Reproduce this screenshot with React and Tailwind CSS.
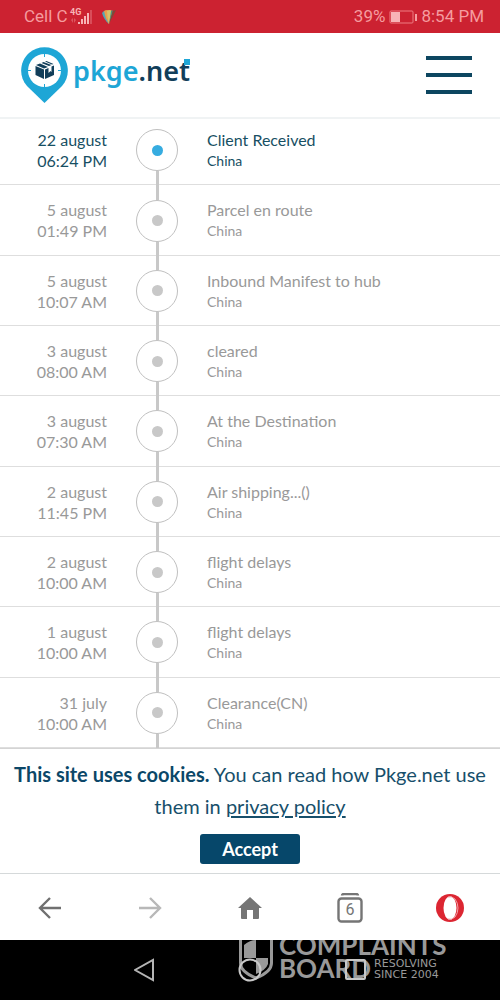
const events = [
  ["22 august", "06:24 PM", "Client Received"],
  ["5 august", "01:49 PM", "Parcel en route"],
  ["5 august", "10:07 AM", "Inbound Manifest to hub"],
  ["3 august", "08:00 AM", "cleared"],
  ["3 august", "07:30 AM", "At the Destination"],
  ["2 august", "11:45 PM", "Air shipping...()"],
  ["2 august", "10:00 AM", "flight delays"],
  ["1 august", "10:00 AM", "flight delays"],
  ["31 july", "10:00 AM", "Clearance(CN)"],
];

function StatusBar() {
  return (
    <div className="flex h-[33px] shrink-0 items-center justify-between bg-[#cc2231] pt-px pr-4 pl-6 font-['Roboto',sans-serif] text-[17px] text-[#f59c9f]">
      <div className="flex items-center">
        <span>Cell C</span>
        <svg className="h-5 w-[26px]" viewBox="0 0 26 20" aria-hidden="true">
          <text x="2" y="8" fontSize="9" fontWeight="700" fill="#f8b4b6">4G</text>
          <g fill="#f8b4b6">
            <path d="M3 13l2-2v5zM6 11l2 2-2 3z" opacity=".35" />
            <rect x="10" y="15" width="2" height="2" />
            <rect x="13" y="12" width="2" height="5" />
            <rect x="16" y="9" width="2" height="8" />
            <rect x="19" y="6" width="2" height="11" />
            <rect x="22" y="3" width="2" height="14" opacity=".3" />
          </g>
        </svg>
        <svg className="ml-2 h-4 w-4" viewBox="0 0 16 16" aria-hidden="true">
          <path d="M0 4Q2 1 5 2L7 15Q2 11 0 4z" fill="#54a6b5" />
          <path d="M2 2Q5 0 8 2L7 15Q3 9 2 2z" fill="#e8a04d" />
          <path d="M5 2Q8 0 10 2L7 15Q5 8 5 2z" fill="#d8c36a" />
          <path d="M9 2l2-1-4 14z" fill="#46937a" />
          <path d="M11 2l3-1-7 14z" fill="#7d4a38" />
        </svg>
      </div>
      <div className="flex items-center gap-1">
        <span>39%</span>
        <svg className="h-4 w-7" viewBox="0 0 28 16" aria-hidden="true">
          <rect x="1" y="2" width="23" height="12" rx="1" fill="none" stroke="#ee7d82" />
          <rect x="2" y="3" width="9" height="10" fill="#f8b4b6" />
          <rect x="26" y="5" width="2" height="7" fill="#f59c9f" />
        </svg>
        <span>8:54 PM</span>
      </div>
    </div>
  );
}

function Header() {
  return (
    <header className="z-10 flex h-[86px] shrink-0 items-center justify-between border-b-2 border-[#f0f3f4] bg-white pr-7 pl-5">
      <a href="#" className="flex items-center gap-[5px]" aria-label="pkge.net">
        <svg className="h-[58px] w-12" viewBox="0 0 48 58" aria-hidden="true">
          <path d="M24.500 57L7 40C-2 30 0 15 9 7a23.500 23.500 0 0 1 31 0c9 8 11 23 2 33z" fill="#1ea6d6" />
          <circle cx="24.500" cy="24.500" r="16.500" fill="#fff" />
          <path d="M24.500 7v4M24.500 38v4M7 24.500h4M38 24.500h4" stroke="#1ea6d6" />
          <g fill="#113e5a">
            <path d="M15.500 20l8.500 3.500v9.500l-8.500-4z" />
            <path d="M25 23.500l3.500-1.500v5l2-2 1 1v-5.500l2.500-1v9.500l-9 4z" />
            <path d="M16 19l4-1.500 8 3.500-4 1.500zM21.500 17l2-1 8 3-2.500 1zM25 15.500l1.500-.5 7 3-1.500.5z" />
          </g>
        </svg>
        <span className="relative pb-2 font-['Noto_Sans',sans-serif] text-[27px] leading-8 font-semibold text-[#113e5a]">
          <span className="text-[#1ea6d6]">pkge</span>.net
          <span className="absolute top-1 right-0 size-[6px] bg-[#1ea6d6]" />
        </span>
      </a>
      <button type="button" aria-label="Menu" className="flex w-[46px] flex-col gap-[13px]">
        <span className="h-1 w-full bg-[#0d4660]" />
        <span className="h-1 w-full bg-[#0d4660]" />
        <span className="h-1 w-full bg-[#0d4660]" />
      </button>
    </header>
  );
}

function TrackingEvent({ date, time, title, current }) {
  return (
    <li className={`flex flex-1 border-b border-[#dedede] text-base leading-[21px] ${current ? "text-[#174f63]" : "text-[#999]"}`}>
      <div className="w-[107px] shrink-0 pt-[14px] text-right">
        <p>{date}</p>
        <p>{time}</p>
      </div>
      <div className="mx-[29px] flex w-[42px] shrink-0 flex-col items-center">
        <span className={`w-[3px] flex-1 ${current ? "" : "bg-[#c8c8c8]"}`} />
        <span className="flex size-[42px] items-center justify-center rounded-full border border-[#c0c0c0]">
          <span className={`size-[11px] rounded-full ${current ? "bg-[#36ace0]" : "bg-[#c8c8c8]"}`} />
        </span>
        <span className="-mb-px w-[3px] flex-1 bg-[#c8c8c8]" />
      </div>
      <div className="pt-[14px]">
        <p>{title}</p>
        <p className="text-[14px] leading-[21px]">China</p>
      </div>
    </li>
  );
}

function CookieNotice() {
  return (
    <section className="z-10 flex shrink-0 flex-col items-center border-t border-[#d4d4d4] bg-white px-3 pt-[9px] pb-[9px] text-center text-xl leading-8 text-[#174f6b]">
      <p>
        <b className="font-bold text-[#0b4768]">This site uses cookies.</b> You can read how Pkge.net use them in{" "}
        <a href="#" className="underline underline-offset-2">privacy policy</a>
      </p>
      <button type="button" className="mt-3 h-[30px] w-[100px] rounded-[3px] bg-[#06476a] text-lg leading-7 font-bold text-white">
        Accept
      </button>
    </section>
  );
}

function BrowserBar() {
  return (
    <nav className="grid h-[67px] shrink-0 grid-cols-5 place-items-center border-t border-[#d5d9da] bg-white pt-px">
      <button type="button" aria-label="Back">
        <svg className="size-6" viewBox="0 0 24 24" fill="none" stroke="#707070" strokeWidth="2.4"><path d="M23 12H2M12 2L2 12l10 10" /></svg>
      </button>
      <button type="button" aria-label="Forward">
        <svg className="size-6" viewBox="0 0 24 24" fill="none" stroke="#b8b8b8" strokeWidth="2.4"><path d="M1 12h21M12 2l10 10-10 10" /></svg>
      </button>
      <button type="button" aria-label="Home">
        <svg className="size-6" viewBox="0 0 24 24" fill="#757575"><path d="M12 1L0 12h3v10q0 1 1 1h5v-9h6v9h5q1 0 1-1V12h3z" /></svg>
      </button>
      <button type="button" aria-label="6 open tabs" className="relative">
        <svg className="h-[30px] w-[26px]" viewBox="0 0 26 30" fill="none" stroke="#757575" strokeWidth="2.4">
          <path d="M5 2.500q0-1.500 2-1.500h12q2 0 2 1.500" />
          <rect x="1.500" y="5.500" width="23" height="23" rx="3" />
        </svg>
        <span className="absolute inset-x-0 top-[7px] text-center font-['Roboto',sans-serif] text-base leading-5 text-[#757575]">6</span>
      </button>
      <button type="button" aria-label="Opera menu">
        <svg className="size-[30px]" viewBox="0 0 30 30">
          <circle cx="15" cy="15" r="14" fill="#dc2632" />
          <ellipse cx="15" cy="15" rx="6.500" ry="11.500" fill="#fff" />
          <path d="M13 4Q16 2.500 20 6Q23 10 23 15T20 24Q16 27.500 13 26" fill="none" stroke="#f3a5aa" />
        </svg>
      </button>
    </nav>
  );
}

function SystemBar() {
  return (
    <footer className="relative flex h-[60px] shrink-0 items-center justify-center gap-20 overflow-hidden bg-black">
      <div className="absolute right-[47px] bottom-5 flex w-[214px] items-end gap-[6px] text-[#999]" aria-label="Complaints Board">
        <svg className="h-[46px] w-[34px] shrink-0" viewBox="0 0 34 46" aria-hidden="true">
          <path d="M1.500 1h31v28q0 9-15.500 15Q1.500 38 1.500 29z" fill="none" stroke="#999" strokeWidth="3" />
          <path d="M5 11q6-5 12-5v18H5zM17 24h12v6q-2 6-12 10z" fill="#999" />
        </svg>
        <div className="text-[26px] leading-[23px] font-bold">
          <p>COMPLAINTS</p>
          <div className="flex items-center gap-[3px]">
            <span>BOARD</span>
            <span className="font-['DejaVu_Sans',sans-serif] text-[11px] leading-[11px] font-normal whitespace-nowrap">RESOLVING<br />SINCE 2004</span>
          </div>
        </div>
      </div>
      <button type="button" aria-label="Back" className="relative"><svg className="size-6" viewBox="0 0 24 24" fill="none" stroke="#b5b5b5" strokeWidth="2"><path d="M19 2v20L1 12z" /></svg></button>
      <button type="button" aria-label="Home" className="relative"><svg className="size-6" viewBox="0 0 24 24" fill="none" stroke="#c8c8c8" strokeWidth="2"><circle cx="12" cy="12" r="10.500" /></svg></button>
      <button type="button" aria-label="Recent apps" className="relative"><svg className="size-6" viewBox="0 0 24 24" fill="none" stroke="#c8c8c8" strokeWidth="2"><rect x="4" y="2" width="19" height="19" rx="1" /></svg></button>
    </footer>
  );
}

export default function App() {
  return (
    <div className="flex min-h-screen flex-col bg-white font-['Lato',sans-serif]">
      <StatusBar />
      <Header />
      <main className="-mt-1 flex flex-1 flex-col">
        <ol className="flex flex-1 flex-col">
          {events.map(([date, time, title], i) => (
            <TrackingEvent key={i} date={date} time={time} title={title} current={i === 0} />
          ))}
        </ol>
      </main>
      <CookieNotice />
      <BrowserBar />
      <SystemBar />
    </div>
  );
}
